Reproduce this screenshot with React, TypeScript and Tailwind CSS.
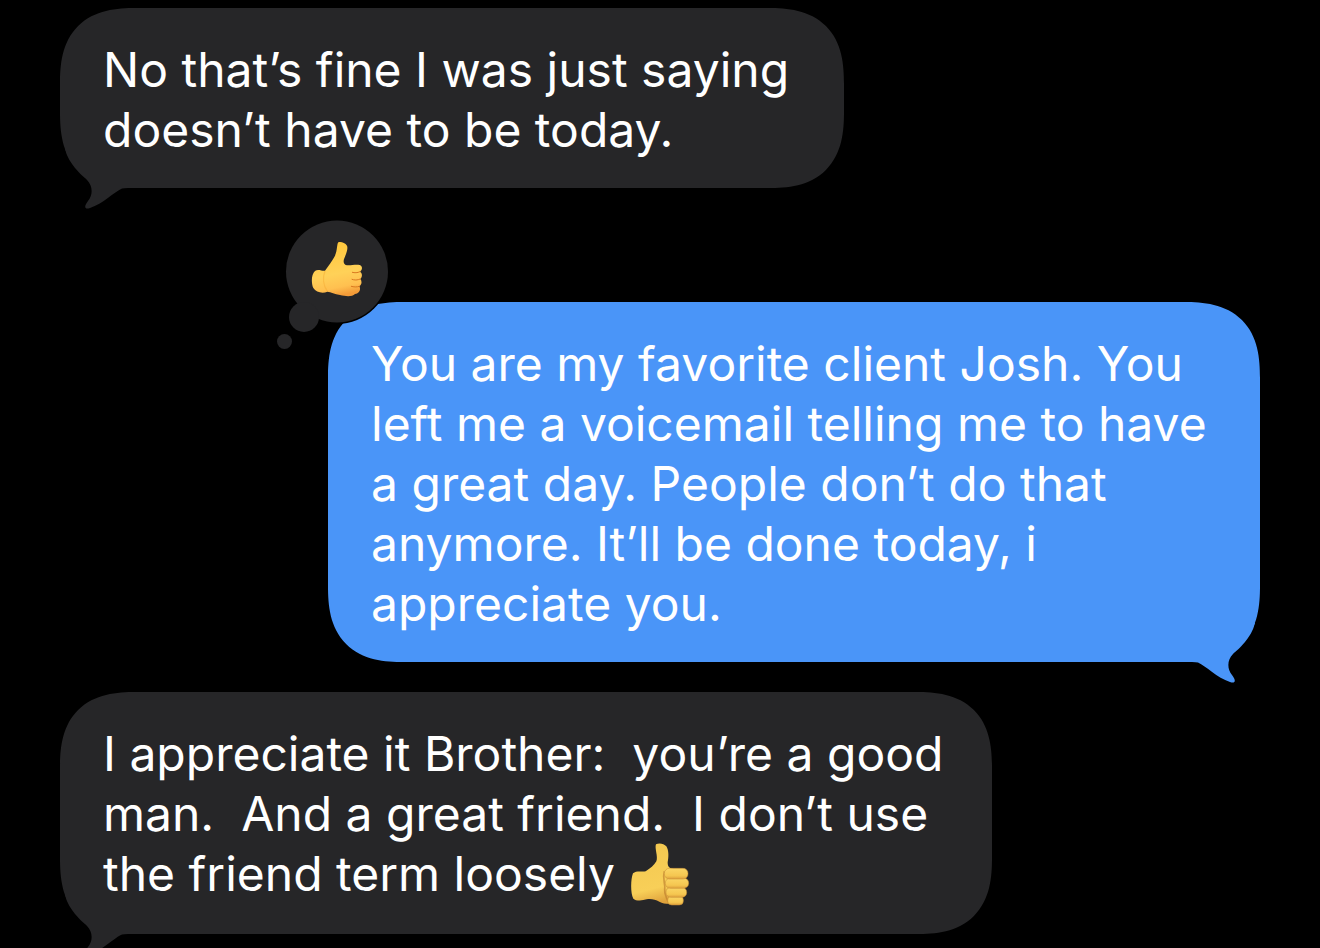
type Message = {
  id: number;
  text: string;
  sent?: boolean;
  liked?: boolean;
  thumb?: boolean;
  width: string;
  gap: string;
};

const messages: Message[] = [
  {
    id: 1,
    text: "No that’s fine I was just saying\ndoesn’t have to be today.",
    width: "max-w-[784px]",
    gap: "",
  },
  {
    id: 2,
    text: "You are my favorite client Josh. You\nleft me a voicemail telling me to have\na great day. People don’t do that\nanymore. It’ll be done today, i\nappreciate you.",
    sent: true,
    liked: true,
    width: "max-w-[932px]",
    gap: "mt-[114px]",
  },
  {
    id: 3,
    text: "I appreciate it Brother:  you’re a good\nman.  And a great friend.  I don’t use\nthe friend term loosely ",
    thumb: true,
    width: "max-w-[932px]",
    gap: "mt-[30px]",
  },
];

const Tail = ({ sent }: { sent?: boolean }) => {
  return (
    <svg
      viewBox="0 0 72 60"
      aria-hidden="true"
      className={
        sent
          ? "absolute right-0 -bottom-[21px] h-[60px] w-[72px] -scale-x-100 text-[#4a95f8]"
          : "absolute left-0 -bottom-[21px] h-[60px] w-[72px] text-[#262628]"
      }
    >
      <path
        d="M5 0 C7 8 11 14 15 19 C20 25 24 28 27 31 C33 37 33 46 28 52 C24 57 24 61 30 59 C43 55 54 43 62 39.6 Q64 39 68 39 L72 39 L72 0 Z"
        fill="currentColor"
      />
    </svg>
  );
};

const Reaction = () => {
  return (
    <svg
      viewBox="276 218 114 132"
      role="img"
      aria-label="Liked"
      className="absolute -left-[52px] -top-[84px] h-[132px] w-[114px]"
    >
      <defs>
        <linearGradient id="likeSkin" x1="0.3" y1="0" x2="0.5" y2="1">
          <stop offset="0" stopColor="#ffc73a" />
          <stop offset="0.6" stopColor="#ffd158" />
          <stop offset="0.85" stopColor="#ffc050" />
          <stop offset="1" stopColor="#f39b38" />
        </linearGradient>
      </defs>
      <circle cx="337" cy="271.5" r="52.5" fill="#000" />
      <circle cx="337" cy="271.5" r="51" fill="#262628" />
      <circle cx="304" cy="317" r="15" fill="#262628" />
      <circle cx="284.5" cy="341.5" r="7.5" fill="#262628" />
      <g transform="translate(260 210) scale(.33333)">
        <path
          d="M235 97 C242 94 255 98 261 107 C265 117 258 131 253 145 C249 154 251 162 257 165 C269 168 286 162 299 165 C308 168 308 179 300 185 C308 190 307 202 301 207 C307 214 305 225 298 229 C304 240 297 251 285 252 C276 261 257 259 240 255 C224 252 213 246 202 245 C189 251 168 248 160 234 C153 219 154 192 165 183 C174 176 187 184 195 182 C205 169 216 154 223 141 C233 124 230 101 235 97Z"
          fill="url(#likeSkin)"
        />
        <path
          d="M300 185 C292 189 284 189 277 187 M301 207 C292 211 283 211 276 208 M298 229 C290 232 281 231 274 229"
          fill="none"
          stroke="#d9781f"
          strokeWidth="3"
          strokeLinecap="round"
        />
        <path
          d="M195 183 C187 203 190 227 202 244"
          fill="none"
          stroke="#f2a62c"
          strokeWidth="4"
          opacity=".4"
        />
      </g>
    </svg>
  );
};

const ThumbsUp = () => {
  return (
    <svg
      viewBox="36 32 180 192"
      role="img"
      aria-label="thumbs up"
      className="-mt-2 ml-[2px] inline-block h-16 w-[60px]"
    >
      <defs>
        <linearGradient id="thumbSkin" x1="0.3" y1="0" x2="0.5" y2="1">
          <stop offset="0" stopColor="#f3c850" />
          <stop offset="0.75" stopColor="#f8cf58" />
          <stop offset="1" stopColor="#dfa23c" />
        </linearGradient>
        <linearGradient id="fingerSkin" x1="0" y1="0" x2="0" y2="1">
          <stop offset="0" stopColor="#fbd665" />
          <stop offset="0.7" stopColor="#f5c650" />
          <stop offset="1" stopColor="#dd9f3c" />
        </linearGradient>
      </defs>
      <path
        d="M114 39 C122 34 138 36 145 45 C153 58 152 78 149 93 C149 105 153 111 164 112 L182 118 L178 214 C159 219 140 219 124 211 C112 204 98 202 86 204 C72 209 53 209 46 202 C37 186 38 143 45 126 C54 117 72 122 83 120 C96 112 109 101 115 90 C121 77 109 49 114 39Z"
        fill="url(#thumbSkin)"
      />
      <path
        d="M139 120 C132 144 143 157 140 174 C138 190 145 196 151 213"
        fill="none"
        stroke="#b9782a"
        strokeWidth="5"
        opacity=".6"
      />
      <rect x="149" y="194" width="47" height="27" rx="12" fill="url(#fingerSkin)" stroke="#c58a34" strokeWidth="1.5" />
      <rect x="144" y="168" width="62" height="30" rx="14" fill="url(#fingerSkin)" stroke="#c58a34" strokeWidth="1.5" />
      <rect x="142" y="140" width="70" height="31" rx="15" fill="url(#fingerSkin)" stroke="#c58a34" strokeWidth="1.5" />
      <rect x="139" y="111" width="71" height="32" rx="15" fill="url(#fingerSkin)" stroke="#c58a34" strokeWidth="1.5" />
    </svg>
  );
};

const Bubble = ({ message }: { message: Message }) => {
  const { text, sent, liked, thumb, width, gap } = message;
  return (
    <li
      className={`relative w-full rounded-[76px] pt-8 pr-8 pb-7 pl-[43px] [corner-shape:superellipse(1.35)] ${width} ${gap} ${
        sent ? "self-end bg-[#4a95f8]" : "self-start bg-[#262628]"
      }`}
    >
      <Tail sent={sent} />
      <p className="relative text-[48px] leading-[60px] whitespace-pre-wrap text-white">
        {text}
        {thumb && <ThumbsUp />}
      </p>
      {liked && <Reaction />}
    </li>
  );
};

export default function App() {
  return (
    <main className="h-screen overflow-hidden bg-black px-[60px] pt-2 font-['Inter',sans-serif]">
      <ul className="flex flex-col">
        {messages.map((message) => (
          <Bubble key={message.id} message={message} />
        ))}
      </ul>
    </main>
  );
}
